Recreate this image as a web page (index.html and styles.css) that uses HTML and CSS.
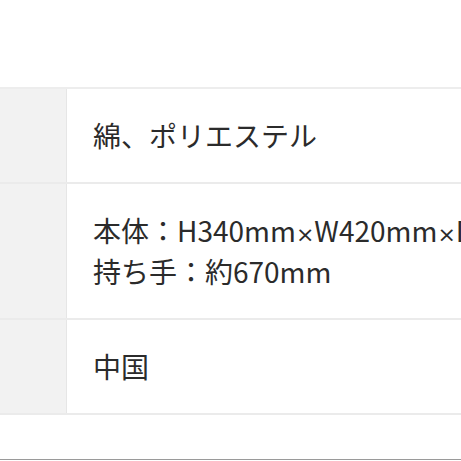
FILE: index.html
```html
<!DOCTYPE html>
<html lang="ja">
<head>
    <meta charset="UTF-8">
    <meta name="viewport" content="width=device-width, initial-scale=1.0">
    <title>商品仕様</title>
    <link rel="stylesheet" href="styles.css">
</head>
<body>
    <div class="page">
        <!-- Spec table -->
        <div class="spec-table">
            <div class="spec-row">
                <div class="spec-label"></div>
                <div class="spec-value">綿、ポリエステル</div>
            </div>
            <div class="spec-row">
                <div class="spec-label"></div>
                <div class="spec-value">本体：H340mm<span class="times">×</span>W420mm<span class="times">×</span>D120mm<br>持ち手：約670mm</div>
            </div>
            <div class="spec-row">
                <div class="spec-label"></div>
                <div class="spec-value">中国</div>
            </div>
        </div>

        <div class="next-section"></div>
    </div>
</body>
</html>
```

FILE: styles.css
```css
html, body {
    margin: 0;
    overflow: hidden;
}

body {
    background-color: #fff;
    color: #2b2b2b;
    font-family: "Noto Sans CJK JP", "Noto Sans", sans-serif;
}

.page {
    width: 461px;
    height: 461px;
    padding-top: 87px;
    box-sizing: border-box;
}

.spec-table {
    border-top: 2px solid #ededed;
}

.spec-row {
    display: grid;
    grid-template-columns: 67px 1fr;
    border-bottom: 2px solid #ebebeb;
}

.spec-label {
    background: #f2f2f2;
    border-right: 1px solid #e6e6e6;
}

.spec-value {
    padding: 26px 0 26px 26px;
    font-size: 28px;
    line-height: 41px;
    white-space: nowrap;
    overflow: hidden;
}

.times {
    font-family: "DejaVu Sans", sans-serif;
    font-size: 22px;
    line-height: 0;
}

.next-section {
    margin-top: 44px;
    border-top: 1px solid #9a9a9a;
}
```
